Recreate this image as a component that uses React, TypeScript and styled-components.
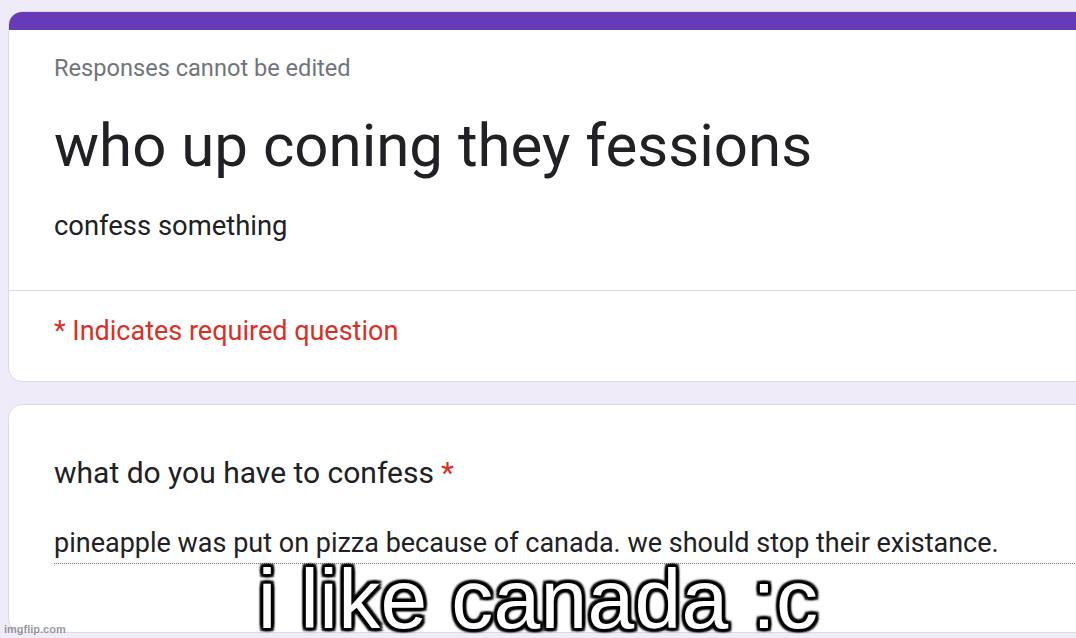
import React from "react";
import styled, { createGlobalStyle } from "styled-components";

const Global = createGlobalStyle`
  html, body { margin: 0; padding: 0; }
  body {
    background: #f0ebf8;
    font-family: Roboto, "Noto Sans", Arial, sans-serif;
    overflow: hidden;
  }
`;

const Page = styled.div`
  position: relative;
  width: 1076px;
  height: 638px;
  overflow: hidden;
  background: #f0ebf8;
  padding: 11px 0 0 8px;
  box-sizing: border-box;
  display: flex;
  flex-direction: column;
  gap: 22px;
`;

const Card = styled.div<{ $h: number }>`
  width: 1100px;
  height: ${(p) => p.$h}px;
  box-sizing: border-box;
  background: #fff;
  border: 1px solid #dadce0;
  border-radius: 14px;
  overflow: hidden;
  display: flex;
  flex-direction: column;
  flex-shrink: 0;
`;

const TopBar = styled.div`
  height: 19px;
  background: #673ab7;
  margin: -1px -1px 0 -1px;
  flex-shrink: 0;
`;

const Header = styled.div`
  height: 261px;
  padding: 22px 0 0 45px;
  box-sizing: border-box;
  border-bottom: 1px solid #dadce0;
  display: flex;
  flex-direction: column;
`;

const Note = styled.div`
  color: #70757a;
  font-size: 23.6px;
  line-height: 32px;
`;

const Title = styled.div`
  color: #202124;
  font-size: 60px;
  line-height: 72px;
  margin-top: 26px;
`;

const Desc = styled.div`
  color: #202124;
  font-size: 27.4px;
  line-height: 36px;
  margin-top: 26px;
`;

const Required = styled.div`
  flex: 1;
  display: flex;
  align-items: center;
  padding: 0 0 10px 45px;
  color: #d93025;
  font-size: 27px;
`;

const QBody = styled.div`
  padding: 50px 0 0 45px;
  display: flex;
  flex-direction: column;
`;

const Question = styled.div`
  color: #202124;
  font-size: 30px;
  line-height: 36px;
`;

const Star = styled.span`
  color: #d93025;
  margin-left: 7px;
`;

const Answer = styled.div`
  margin-top: 36px;
  color: #202124;
  font-size: 27px;
  line-height: 32px;
  padding-bottom: 4px;
  border-bottom: 1px dotted #70757a;
`;

const Caption = styled.div`
  position: absolute;
  left: 0;
  right: 0;
  top: 551px;
  text-align: center;
  font-family: "Liberation Sans", Arial, sans-serif;
  font-size: 84px;
  line-height: 96px;
  color: #fff;
  letter-spacing: 0.3px;
  text-shadow:
    -3px -3px 2px #000, 3px -3px 2px #000, -3px 3px 2px #000, 3px 3px 2px #000,
    0 -3px 2px #000, 0 3px 2px #000, -3px 0 2px #000, 3px 0 2px #000;
`;

const Watermark = styled.div`
  position: absolute;
  left: 4px;
  bottom: 3px;
  font-family: "Liberation Sans", Arial, sans-serif;
  font-size: 11px;
  font-weight: bold;
  color: rgba(120, 120, 120, 0.75);
`;

export default function App() {
  return (
    <>
      <Global />
      <Page>
        <Card $h={371}>
          <TopBar />
          <Header>
            <Note>Responses cannot be edited</Note>
            <Title>who up coning they fessions</Title>
            <Desc>confess something</Desc>
          </Header>
          <Required>* Indicates required question</Required>
        </Card>
        <Card $h={229}>
          <QBody>
            <Question>
              what do you have to confess<Star>*</Star>
            </Question>
            <Answer>
              pineapple was put on pizza because of canada. we should stop their existance.
            </Answer>
          </QBody>
        </Card>
        <Caption>i like canada :c</Caption>
        <Watermark>imgflip.com</Watermark>
      </Page>
    </>
  );
}
